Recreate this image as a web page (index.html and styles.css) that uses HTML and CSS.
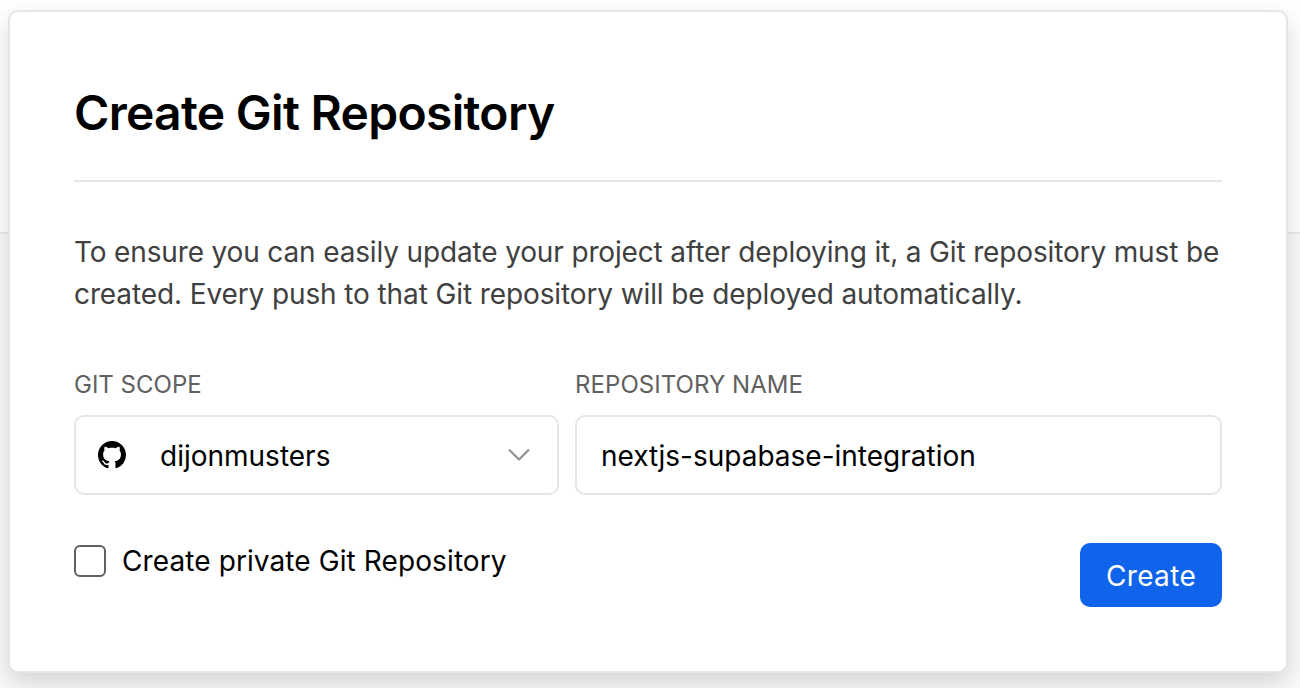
FILE: index.html
```html
<!DOCTYPE html>
<html lang="en">
<head>
<meta charset="utf-8">
<title>Create Git Repository</title>
<link rel="stylesheet" href="styles.css">
</head>
<body>
<main class="card">
  <h1 class="title">Create Git Repository</h1>
  <p class="intro"><span class="line-first">To ensure you can easily update your project after deploying it, a Git repository must be</span><br>created. Every push to that Git repository will be deployed automatically.</p>
  <div class="fields">
    <div class="field">
      <div class="label">GIT SCOPE</div>
      <div class="control scope">
        <svg class="github" viewBox="0 0 16 16"><path fill-rule="evenodd" d="M8 0C3.58 0 0 3.58 0 8c0 3.54 2.29 6.53 5.47 7.59.4.07.55-.17.55-.38 0-.19-.01-.82-.01-1.49-2.01.37-2.53-.49-2.69-.94-.09-.23-.48-.94-.82-1.13-.28-.15-.68-.52-.01-.53.63-.01 1.08.58 1.23.82.72 1.21 1.87.87 2.33.66.07-.52.28-.87.51-1.07-1.78-.2-3.64-.89-3.64-3.95 0-.87.31-1.59.82-2.15-.08-.2-.36-1.02.08-2.12 0 0 .67-.21 2.2.82.64-.18 1.32-.27 2-.27s1.36.09 2 .27c1.53-1.04 2.2-.82 2.2-.82.44 1.1.16 1.92.08 2.12.51.56.82 1.27.82 2.15 0 3.07-1.87 3.75-3.65 3.95.29.25.54.73.54 1.48 0 1.07-.01 1.93-.01 2.2 0 .21.15.46.55.38A8.01 8.01 0 0 0 16 8c0-4.42-3.58-8-8-8z"/></svg>
        <span class="value">dijonmusters</span>
        <svg class="chevron" viewBox="0 0 22 12"><path d="M1.7 1.2 11 10.5 20.3 1.2"/></svg>
      </div>
    </div>
    <div class="field">
      <div class="label repo-label">REPOSITORY NAME</div>
      <div class="control repo"><span class="value">nextjs-supabase-integration</span></div>
    </div>
  </div>
  <div class="actions">
    <label class="private"><span class="box"></span><span class="private-text">Create private Git Repository</span></label>
    <button class="create">Create</button>
  </div>
</main>
</body>
</html>
```
FILE: styles.css
```css
* { box-sizing: border-box; }
body {
  margin: 0;
  height: 688px;
  overflow: hidden;
  padding: 10px 12px 0 8px;
  background: linear-gradient(#fff 0 232px, #eaeaea 232px 234px, #fafafa 234px);
  font-family: Inter, sans-serif;
  color: #000;
}
.card {
  height: 663px;
  padding: 64px;
  border: 2px solid #e6e6e6;
  border-radius: 10px;
  background: #fff;
  box-shadow: 0 10px 24px rgba(0, 0, 0, .15);
}
.title {
  margin: 0;
  height: 106px;
  padding-top: 8px;
  border-bottom: 2px solid #e6e6e6;
  font-size: 48px;
  font-weight: 600;
  line-height: 58px;
  letter-spacing: -.7px;
  white-space: nowrap;
}
.intro {
  margin: 49px 0 0;
  color: #404040;
  font-size: 28px;
  line-height: 42px;
  letter-spacing: -.11px;
  white-space: nowrap;
}
.line-first { letter-spacing: -.148px; }
.fields {
  display: grid;
  grid-template-columns: 485px 647px;
  gap: 16px;
  margin-top: 54px;
}
.label {
  height: 46px;
  padding-top: 1px;
  color: #606060;
  font-size: 24px;
  line-height: 30px;
}
.repo-label { letter-spacing: .06px; }
.control {
  display: flex;
  align-items: center;
  height: 80px;
  border: 2px solid #e6e6e6;
  border-radius: 10px;
  font-size: 28px;
}
.value { padding-top: 2px; }
.scope { padding: 0 27px 0 22px; }
.github { width: 28px; height: 28px; margin-right: 34px; }
.chevron {
  width: 22px;
  height: 12px;
  margin-left: auto;
  fill: none;
  stroke: #929292;
  stroke-width: 2.2;
  stroke-linecap: round;
  stroke-linejoin: round;
}
.repo { padding-left: 24px; }
.actions {
  display: flex;
  justify-content: space-between;
  margin-top: 48px;
}
.private {
  display: flex;
  align-items: center;
  gap: 16px;
  height: 36px;
  font-size: 28px;
  letter-spacing: .1px;
}
.box {
  width: 32px;
  height: 32px;
  border: 2px solid #606060;
  border-radius: 6px;
}
.create {
  width: 142px;
  height: 64px;
  padding: 2px 0 0;
  border: 0;
  border-radius: 10px;
  background: #1064eb;
  color: #fff;
  font: 400 28px Inter, sans-serif;
  letter-spacing: .35px;
}
```
